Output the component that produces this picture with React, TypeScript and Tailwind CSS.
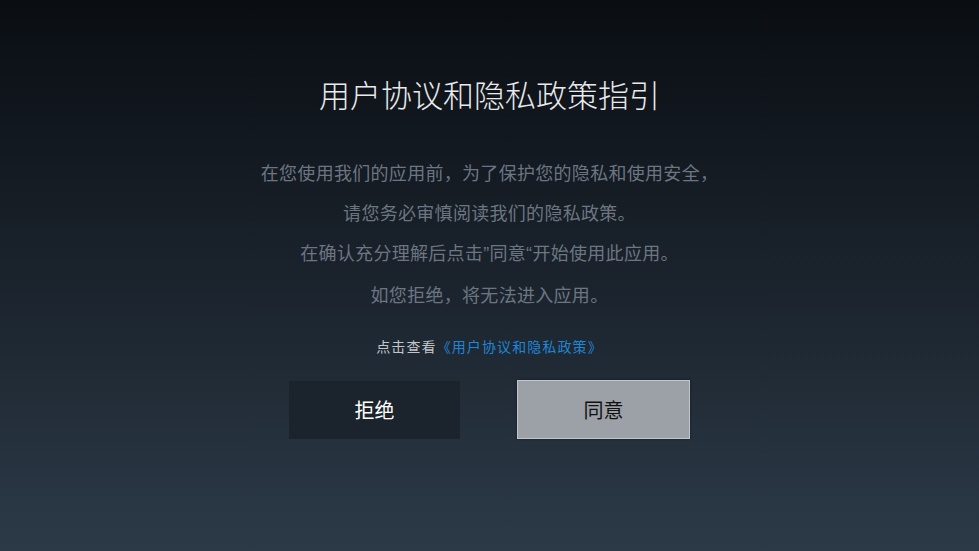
import React from "react";

export default function App() {
  const q = { fontFamily: '"Liberation Sans", sans-serif' };
  return (
    <div
      className="w-full h-screen min-h-[551px] flex flex-col items-center bg-gradient-to-b from-[#0a0e13] to-[#2c3a48] overflow-hidden"
      style={{ fontFamily: '"Noto Sans CJK SC", "Noto Sans", sans-serif' }}
    >
      <h1 className="mt-[76px] text-[31px] leading-[36px] tracking-[0px] text-[#e8eaec] font-light">
        用户协议和隐私政策指引
      </h1>
      <div className="mt-[40px] flex flex-col items-center text-[18px] leading-[40px] tracking-[0.3px] text-[#6c7682]">
        <p>在您使用我们的应用前，为了保护您的隐私和使用安全，</p>
        <p>请您务必审慎阅读我们的隐私政策。</p>
        <p>
          在确认充分理解后点击<span style={q}>”</span>同意<span style={q}>“</span>开始使用此应用。
        </p>
        <p>如您拒绝，将无法进入应用。</p>
      </div>
      <p className="mt-[22px] text-[14px] leading-[20px] tracking-[1.1px] text-[#c2c6ca]">
        点击查看<span className="text-[#1f86d6]">《用户协议和隐私政策》</span>
      </p>
      <div className="mt-[25px] flex gap-[57px]">
        <button className="w-[171px] h-[58px] bg-[#1b232c] text-white text-[20px]">
          拒绝
        </button>
        <button className="w-[173px] h-[59px] -mt-px bg-[#9ca1a8] border border-[#c3c6c9] text-[#111] text-[20px] shadow-[0_0_2px_rgba(0,0,0,0.5)]">
          同意
        </button>
      </div>
    </div>
  );
}
